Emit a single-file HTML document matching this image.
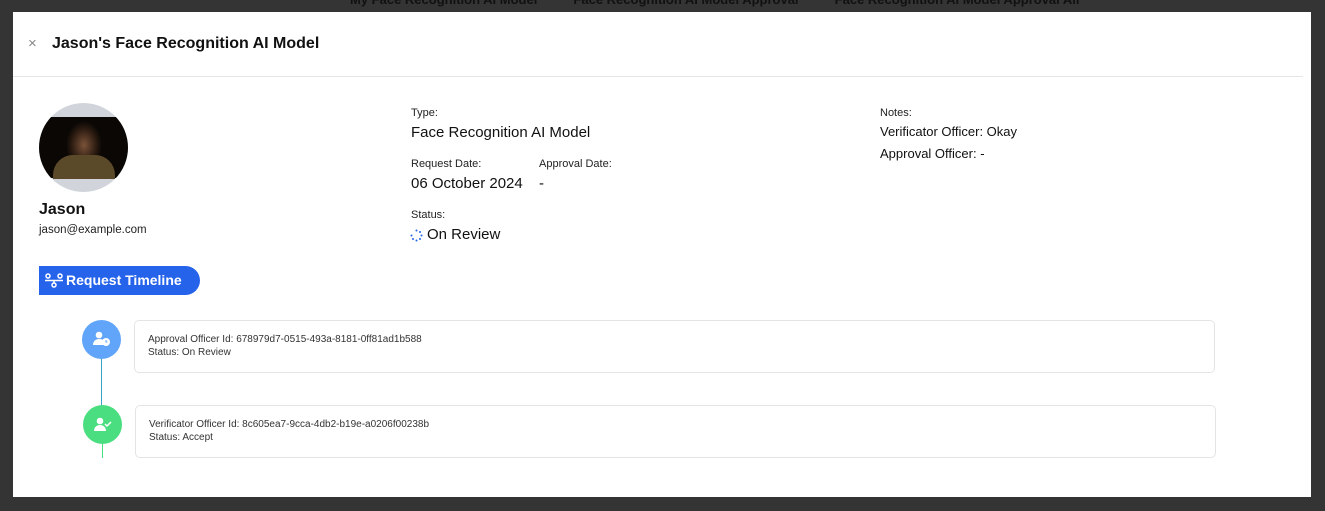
<!DOCTYPE html>
<html><head><style>
body{margin:0;width:1325px;height:511px;background:#343434;font-family:"Liberation Sans",sans-serif;position:relative;overflow:hidden;color:#111}
.m{position:absolute;left:13px;top:12px;width:1298px;height:485px;background:#fff}
.a{position:absolute;white-space:nowrap}
.lbl{font-size:11px;color:#222}
.val{font-size:15px;color:#111}
.card{position:absolute;left:134px;width:1079px;height:51px;border:1px solid #e4e4e4;border-radius:5px;background:#fff}
.card div{position:absolute;left:13px;font-size:10px;color:#333}
</style></head><body>
<div class="a" style="left:350px;top:-8px;font-size:13px;color:#111;font-weight:bold">My Face Recognition AI Model &nbsp;&nbsp;&nbsp;&nbsp;&nbsp;&nbsp;&nbsp;&nbsp; Face Recognition AI Model Approval &nbsp;&nbsp;&nbsp;&nbsp;&nbsp;&nbsp;&nbsp;&nbsp; Face Recognition AI Model Approval All</div>
<div class="m"></div>
<div class="a" style="left:28px;top:35px;font-size:15px;color:#888">×</div>
<div class="a" style="left:52px;top:35px;font-size:16px;font-weight:bold;color:#111">Jason's Face Recognition AI Model</div>
<div class="a" style="left:13px;top:76px;width:1290px;height:1px;background:#e5e5e5"></div>
<div class="a" style="left:39px;top:103px;width:89px;height:89px;border-radius:50%;background:#d1d5db;overflow:hidden">
<div style="position:absolute;left:0;top:14px;width:89px;height:61px;background:radial-gradient(ellipse 18px 24px at 45px 28px,#7a5238,#2a1a10 70%,#0a0705)"></div>
<div style="position:absolute;left:14px;top:52px;width:62px;height:24px;background:#5b4a2a;border-radius:20px 20px 0 0"></div>
</div>
<div class="a" style="left:39px;top:201px;font-size:16px;font-weight:bold">Jason</div>
<div class="a" style="left:39px;top:224px;font-size:11.5px;color:#222">jason@example.com</div>
<div class="a" style="left:39px;top:266px;width:161px;height:29px;background:#2563eb;border-radius:0 15px 15px 0;color:#fff;font-weight:bold;font-size:14px;line-height:29px">
<svg style="position:absolute;left:6px;top:7px" width="18" height="15" viewBox="0 0 18 15" fill="none" stroke="#fff" stroke-width="1.5"><circle cx="3" cy="3" r="2"/><circle cx="15" cy="3" r="2"/><circle cx="9" cy="12" r="2"/><path d="M0 7.5h18M9 7.5v3"/></svg>
<span style="position:absolute;left:27px">Request Timeline</span></div>
<div class="a lbl" style="left:411px;top:107px">Type:</div>
<div class="a val" style="left:411px;top:124px">Face Recognition AI Model</div>
<div class="a lbl" style="left:411px;top:158px">Request Date:</div>
<div class="a lbl" style="left:539px;top:158px">Approval Date:</div>
<div class="a val" style="left:411px;top:175px">06 October 2024</div>
<div class="a val" style="left:539px;top:175px">-</div>
<div class="a lbl" style="left:411px;top:209px">Status:</div>
<svg class="a" style="left:410px;top:229px" width="13" height="13" viewBox="0 0 13 13" fill="#2563eb"><circle cx="6.5" cy="1.5" r="1"/><circle cx="10" cy="3" r="1"/><circle cx="11.5" cy="6.5" r="1"/><circle cx="10" cy="10" r="1"/><circle cx="6.5" cy="11.5" r="1"/><circle cx="3" cy="10" r="1"/><circle cx="1.5" cy="6.5" r="1"/></svg>
<div class="a val" style="left:427px;top:226px">On Review</div>
<div class="a lbl" style="left:880px;top:107px">Notes:</div>
<div class="a" style="left:880px;top:124px;font-size:13px">Verificator Officer: Okay</div>
<div class="a" style="left:880px;top:146px;font-size:13px">Approval Officer: -</div>
<div class="a" style="left:101px;top:340px;width:1px;height:80px;background:#3aa3c8"></div>
<div class="a" style="left:102px;top:420px;width:1px;height:38px;background:#4ade80"></div>
<div class="a" style="left:82px;top:320px;width:39px;height:39px;border-radius:50%;background:#60a5fa"></div>
<svg class="a" style="left:93px;top:331px" width="18" height="16" viewBox="0 0 18 16" fill="#fff"><circle cx="6" cy="4" r="3.3"/><path d="M0 14c0-4 3-6 6-6s4 1 5 2v4z"/><circle cx="13" cy="11" r="4"/><path d="M13 9v2h1.5" stroke="#60a5fa" stroke-width="1" fill="none"/></svg>
<div class="a" style="left:83px;top:405px;width:39px;height:39px;border-radius:50%;background:#4ade80"></div>
<svg class="a" style="left:94px;top:417px" width="18" height="14" viewBox="0 0 18 14" fill="#fff"><circle cx="6" cy="4" r="3.3"/><path d="M0 14c0-4 3-6 6-6s6 2 6 6z"/><path d="M11 7l2 2 4-4" stroke="#fff" stroke-width="1.5" fill="none"/></svg>
<div class="card" style="top:320px"><div style="top:13px">Approval Officer Id: 678979d7-0515-493a-8181-0ff81ad1b588</div><div style="top:26px">Status: On Review</div></div>
<div class="card" style="top:405px;left:135px"><div style="top:13px">Verificator Officer Id: 8c605ea7-9cca-4db2-b19e-a0206f00238b</div><div style="top:26px">Status: Accept</div></div>
</body></html>
